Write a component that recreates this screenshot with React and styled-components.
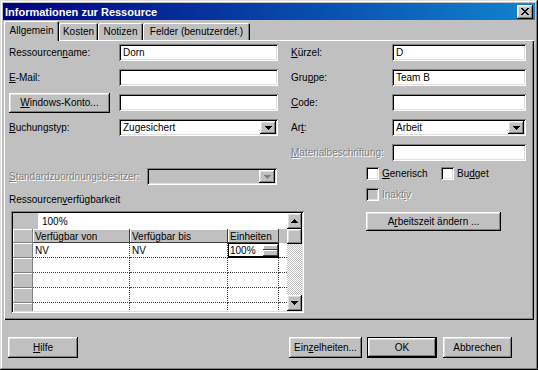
import React from 'react';
import styled, { createGlobalStyle, css } from 'styled-components';

const GlobalStyle = createGlobalStyle`
  html, body {
    margin: 0;
    padding: 0;
    background: #c0c0c0;
  }
  body {
    font-family: "Liberation Sans", Arial, sans-serif;
    font-size: 10px;
    color: #000;
  }
  * {
    box-sizing: border-box;
  }
`;

const raised = css`
  background: #c0c0c0;
  box-shadow: inset -1px -1px #000, inset 1px 1px #fff, inset -2px -2px #808080,
    inset 2px 2px #dfdfdf;
`;

const sunken = css`
  box-shadow: inset 1px 1px #808080, inset -1px -1px #fff, inset 2px 2px #000,
    inset -2px -2px #dfdfdf;
`;

const disabledText = css`
  color: #808080;
  text-shadow: 1px 1px 0 #fff;
`;

const Window = styled.div`
  width: 538px;
  height: 370px;
  padding: 3px;
  display: flex;
  flex-direction: column;
  background: #c0c0c0;
  box-shadow: inset -1px -1px #000, inset 1px 1px #dfdfdf, inset -2px -2px #808080,
    inset 2px 2px #fff;
`;

const TitleBar = styled.div`
  height: 17px;
  display: flex;
  align-items: center;
  padding: 0 2px;
  background: linear-gradient(to right, #000080, #1084d0);
`;

const TitleText = styled.span`
  color: #fff;
  font-weight: bold;
  font-size: 11px;
`;

const CloseButton = styled.div`
  ${raised};
  margin-left: auto;
  width: 16px;
  height: 14px;
  display: flex;
  align-items: center;
  justify-content: center;
`;

const TabStrip = styled.div`
  display: flex;
  align-items: flex-end;
  height: 19px;
  margin: 1px 1px 0;
  position: relative;
  z-index: 2;
`;

const Tab = styled.div`
  width: ${(p) => p.$w}px;
  height: ${(p) => (p.$active ? 20 : 17)}px;
  margin-bottom: ${(p) => (p.$active ? -1 : 0)}px;
  padding-bottom: ${(p) => (p.$active ? 2 : 0)}px;
  display: flex;
  align-items: center;
  justify-content: center;
  background: #c0c0c0;
  border-radius: 2px 2px 0 0;
  box-shadow: inset 1px 1px #fff, inset -1px 0 #000, inset -2px 0 #808080;
`;

const Panel = styled.div`
  height: 280px;
  margin: 0 1px;
  padding: 4px 0 0 5px;
  display: flex;
  flex-direction: column;
  box-shadow: inset 1px 1px #fff, inset -1px -1px #000, inset -2px -2px #808080;
`;

const FieldGrid = styled.div`
  display: grid;
  grid-template-columns: 269px 235px;
  grid-auto-rows: 17px;
  column-gap: 13px;
  row-gap: 8px;
`;

const Row = styled.div`
  display: flex;
  align-items: center;
  height: 17px;
  width: ${(p) => (p.$w ? `${p.$w}px` : 'auto')};
  margin-top: ${(p) => p.$mt || 0}px;
`;

const Label = styled.span`
  flex: none;
  width: ${(p) => p.$w}px;
  white-space: nowrap;
  ${(p) => p.$disabled && disabledText};

  u {
    text-decoration: underline;
  }
`;

const TextField = styled.div`
  ${sunken};
  flex: 1;
  height: 17px;
  display: flex;
  align-items: center;
  padding: 0 4px;
  background: ${(p) => (p.$disabled ? '#c0c0c0' : '#fff')};
`;

const ComboField = styled(TextField)`
  padding: 2px 2px 2px 4px;
  justify-content: space-between;
`;

const DropButton = styled.div`
  ${raised};
  width: 16px;
  height: 13px;
  display: flex;
  align-items: center;
  justify-content: center;
`;

const ButtonSlot = styled.div`
  flex: none;
  width: 110px;
`;

const PushButton = styled.div`
  ${raised};
  width: ${(p) => p.$w}px;
  height: ${(p) => p.$h || 21}px;
  display: flex;
  align-items: center;
  justify-content: center;
  white-space: nowrap;
  margin-top: ${(p) => p.$mt || 0}px;
`;

const DefaultFrame = styled.div`
  border: 1px solid #000;
  display: flex;
`;

const LowerArea = styled.div`
  display: flex;
  margin-top: 6px;
`;

const LeftColumn = styled.div`
  width: 294px;
  display: flex;
  flex-direction: column;
`;

const RightColumn = styled.div`
  margin-left: 63px;
  display: flex;
  flex-direction: column;
`;

const SectionLabel = styled.div`
  margin-top: 8px;
  line-height: 13px;
`;

const GridBox = styled.div`
  ${sunken};
  margin: 5px 0 0 2px;
  width: 293px;
  height: 102px;
  padding: 2px;
  display: flex;
  background: #fff;
`;

const Table = styled.div`
  flex: 1;
  display: flex;
  flex-direction: column;
  overflow: hidden;
`;

const TableRow = styled.div`
  display: flex;
  flex: none;
  height: ${(p) => p.$h || 15}px;
  background: ${(p) => (p.$header ? '#c0c0c0' : '#fff')};
`;

const RowHead = styled.div`
  flex: none;
  width: ${(p) => p.$w || 20}px;
  background: #c0c0c0;
  box-shadow: ${(p) => (p.$flat ? 'none' : 'inset -1px -1px #808080, inset 1px 1px #fff')};
`;

const EditLine = styled.div`
  flex: 1;
  background: #fff;
  padding-left: 4px;
  display: flex;
  align-items: center;
`;

const HeadCell = styled.div`
  flex: none;
  width: ${(p) => p.$w}px;
  padding-left: 2px;
  display: flex;
  align-items: center;
  background: #c0c0c0;
  box-shadow: inset -1px -1px #404040, inset 1px 1px #fff;
`;

const Cell = styled.div`
  flex: none;
  width: ${(p) => p.$w}px;
  padding-left: 2px;
  display: flex;
  align-items: center;
  border-right: 1px dotted #404040;
  border-bottom: 1px dotted #404040;
`;

const Filler = styled.div`
  flex: 1;
  border-bottom: ${(p) => (p.$line ? '1px dotted #404040' : 'none')};
`;

const UnitEditor = styled.div`
  flex: none;
  width: 51px;
  border: 1px solid #000;
  border-bottom-width: 2px;
  display: flex;
  align-items: center;
  padding-left: 1px;
  background: #fff;
`;

const Spinner = styled.div`
  margin-left: auto;
  width: 15px;
  height: 11px;
  display: flex;
  flex-direction: column;
`;

const SpinHalf = styled.div`
  flex: 1;
  background: #c0c0c0;
  box-shadow: inset -1px -1px #404040, inset 1px 1px #fff;
`;

const ScrollBar = styled.div`
  flex: none;
  width: 15px;
  display: flex;
  flex-direction: column;
`;

const ScrollButton = styled.div`
  ${raised};
  flex: none;
  height: ${(p) => p.$h || 16}px;
  display: flex;
  align-items: center;
  justify-content: center;
`;

const ScrollTrack = styled.div`
  flex: 1;
  background: repeating-conic-gradient(#c0c0c0 0 25%, #fff 0 50%) 0 0 / 2px 2px;
`;

const CheckRow = styled.div`
  display: flex;
  align-items: center;
  height: 13px;
  margin-top: ${(p) => p.$mt || 0}px;
`;

const CheckItem = styled.label`
  display: flex;
  align-items: center;
  width: ${(p) => (p.$w ? `${p.$w}px` : 'auto')};
  ${(p) => p.$disabled && disabledText};
`;

const CheckBox = styled.span`
  ${sunken};
  flex: none;
  width: 13px;
  height: 13px;
  margin-right: 3px;
  background: ${(p) => (p.$disabled ? '#c0c0c0' : '#fff')};
`;

const Footer = styled.div`
  display: flex;
  align-items: center;
  margin-top: 17px;
  padding: 0 23px 0 5px;
  gap: 5px;
`;

const Spacer = styled.div`
  flex: 1;
`;

const Triangle = ({ down = true, color = '#000' }) => (
  <svg width="7" height="4" viewBox="0 0 7 4" shapeRendering="crispEdges">
    {down ? (
      <path d="M0 0h7v1H0zM1 1h5v1H1zM2 2h3v1H2zM3 3h1v1H3z" fill={color} />
    ) : (
      <path d="M3 0h1v1H3zM2 1h3v1H2zM1 2h5v1H1zM0 3h7v1H0z" fill={color} />
    )}
  </svg>
);

const CloseGlyph = () => (
  <svg width="8" height="7" viewBox="0 0 8 7" shapeRendering="crispEdges">
    <path
      d="M0 0h2v1H0zM6 0h2v1H6zM1 1h2v1H1zM5 1h2v1H5zM2 2h4v1H2zM3 3h2v1H3zM2 4h4v1H2zM1 5h2v1H1zM5 5h2v1H5zM0 6h2v1H0zM6 6h2v1H6z"
      fill="#000"
    />
  </svg>
);

const Combo = ({ value, disabled }) => (
  <ComboField $disabled={disabled}>
    <span>{value}</span>
    <DropButton>
      <Triangle color={disabled ? '#808080' : '#000'} />
    </DropButton>
  </ComboField>
);

const tabs = [
  { label: 'Allgemein', w: 55, active: true },
  { label: 'Kosten', w: 39 },
  { label: 'Notizen', w: 45 },
  { label: 'Felder (benutzerdef.)', w: 107 },
];

const emptyRows = [0, 1, 2, 3];

export default function App() {
  return (
    <>
      <GlobalStyle />
      <Window>
        <TitleBar>
          <TitleText>Informationen zur Ressource</TitleText>
          <CloseButton>
            <CloseGlyph />
          </CloseButton>
        </TitleBar>

        <TabStrip>
          {tabs.map((t) => (
            <Tab key={t.label} $w={t.w} $active={t.active}>
              {t.label}
            </Tab>
          ))}
        </TabStrip>

        <Panel>
          <FieldGrid>
            <Row>
              <Label $w={110}>
                Ressourcen<u>n</u>ame:
              </Label>
              <TextField>Dorn</TextField>
            </Row>
            <Row>
              <Label $w={101}>
                <u>K</u>ürzel:
              </Label>
              <TextField>D</TextField>
            </Row>

            <Row>
              <Label $w={110}>
                <u>E</u>-Mail:
              </Label>
              <TextField />
            </Row>
            <Row>
              <Label $w={101}>
                Gru<u>p</u>pe:
              </Label>
              <TextField>Team B</TextField>
            </Row>

            <Row>
              <ButtonSlot>
                <PushButton $w={101} $h={20}>
                  <span>
                    <u>W</u>indows-Konto...
                  </span>
                </PushButton>
              </ButtonSlot>
              <TextField />
            </Row>
            <Row>
              <Label $w={101}>
                <u>C</u>ode:
              </Label>
              <TextField />
            </Row>

            <Row>
              <Label $w={110}>
                <u>B</u>uchungstyp:
              </Label>
              <Combo value="Zugesichert" />
            </Row>
            <Row>
              <Label $w={101}>
                Ar<u>t</u>:
              </Label>
              <Combo value="Arbeit" />
            </Row>

            <div />
            <Row>
              <Label $w={101} $disabled>
                <u>M</u>aterialbeschriftung:
              </Label>
              <TextField />
            </Row>
          </FieldGrid>

          <LowerArea>
            <LeftColumn>
              <Row $w={268} $mt={1}>
                <Label $w={138} $disabled>
                  <u>S</u>tandardzuordnungsbesitzer:
                </Label>
                <Combo disabled />
              </Row>
              <SectionLabel>
                Ressourcen<u>v</u>erfügbarkeit
              </SectionLabel>
              <GridBox>
                <Table>
                  <TableRow $h={16}>
                    <RowHead $w={25} $flat />
                    <EditLine>100%</EditLine>
                  </TableRow>
                  <TableRow $h={14} $header>
                    <RowHead />
                    <HeadCell $w={97}>Verfügbar von</HeadCell>
                    <HeadCell $w={98}>Verfügbar bis</HeadCell>
                    <HeadCell $w={51}>Einheiten</HeadCell>
                    <Filler />
                  </TableRow>
                  <TableRow>
                    <RowHead />
                    <Cell $w={97}>NV</Cell>
                    <Cell $w={98}>NV</Cell>
                    <UnitEditor>
                      100%
                      <Spinner>
                        <SpinHalf />
                        <SpinHalf />
                      </Spinner>
                    </UnitEditor>
                    <Filler $line />
                  </TableRow>
                  {emptyRows.map((r) => (
                    <TableRow key={r}>
                      <RowHead />
                      <Cell $w={97} />
                      <Cell $w={98} />
                      <Cell $w={51} />
                      <Filler $line />
                    </TableRow>
                  ))}
                </Table>
                <ScrollBar>
                  <ScrollButton>
                    <Triangle down={false} />
                  </ScrollButton>
                  <ScrollButton $h={15} />
                  <ScrollTrack />
                  <ScrollButton>
                    <Triangle />
                  </ScrollButton>
                </ScrollBar>
              </GridBox>
            </LeftColumn>

            <RightColumn>
              <CheckRow>
                <CheckItem $w={75}>
                  <CheckBox />
                  <span>
                    <u>G</u>enerisch
                  </span>
                </CheckItem>
                <CheckItem>
                  <CheckBox />
                  <span>
                    Bu<u>d</u>get
                  </span>
                </CheckItem>
              </CheckRow>
              <CheckRow $mt={8}>
                <CheckItem $disabled>
                  <CheckBox $disabled />
                  <span>
                    Inakt<u>i</u>v
                  </span>
                </CheckItem>
              </CheckRow>
              <PushButton $w={135} $h={19} $mt={11}>
                <span>
                  A<u>r</u>beitszeit ändern ...
                </span>
              </PushButton>
            </RightColumn>
          </LowerArea>
        </Panel>

        <Footer>
          <PushButton $w={70}>
            <span>
              <u>H</u>ilfe
            </span>
          </PushButton>
          <Spacer />
          <PushButton $w={73}>
            <span>
              Ein<u>z</u>elheiten...
            </span>
          </PushButton>
          <DefaultFrame>
            <PushButton $w={68} $h={19}>
              OK
            </PushButton>
          </DefaultFrame>
          <PushButton $w={69} style={{ marginLeft: 1 }}>
            Abbrechen
          </PushButton>
        </Footer>
      </Window>
    </>
  );
}
